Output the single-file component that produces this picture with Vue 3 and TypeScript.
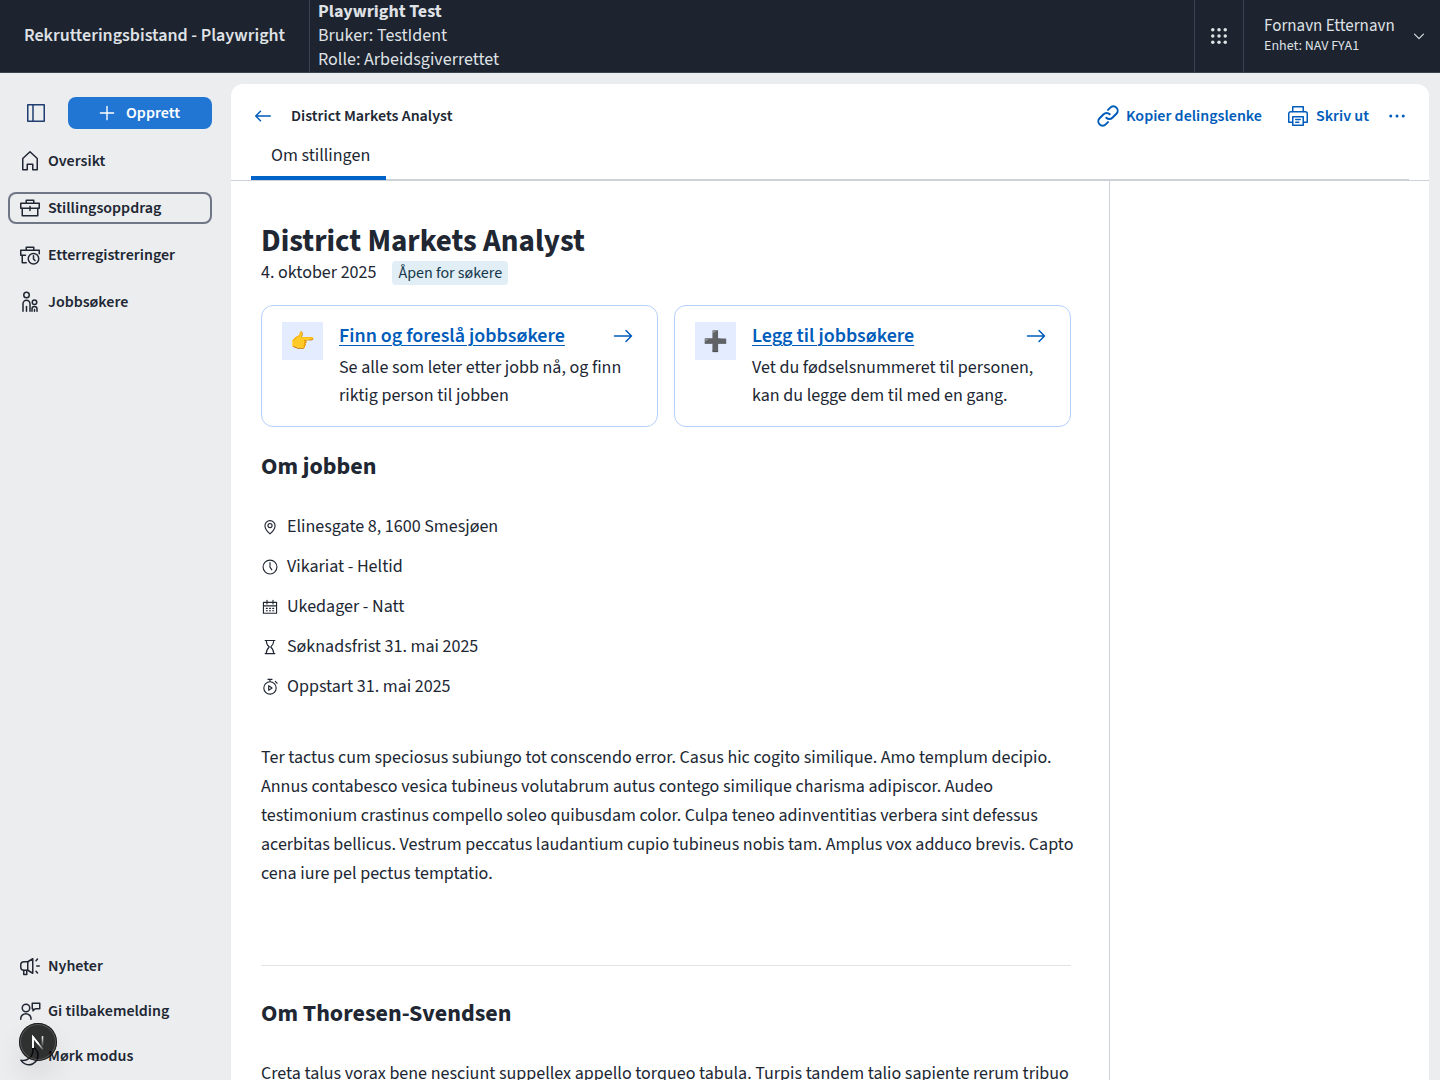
<script setup lang="ts">
import { defineComponent, h, type PropType } from 'vue'

type Shape = [tag: string, attrs: Record<string, string | number>]

const p = (d: string): Shape => ['path', { d }]
const dot = (cx: number, cy: number, r: number): Shape => ['circle', { cx, cy, r, fill: 'currentColor', stroke: 'none' }]

const shapes: Record<string, Shape[]> = {
  sidebar: [p('M3.75 3.75h16.5v16.5H3.75z'), p('M9 3.75v16.5')],
  plus: [p('M12 4.75v14.5M4.75 12h14.5')],
  house: [p('M12 2.75 4.75 9.5v11.250h4.500v-5.500h5.500v5.500h4.500V9.500z')],
  briefcase: [
    p('M2.75 7.25h18.5v5H2.75z'),
    p('M4.25 12.5v7.25h15.5V12.5'),
    p('M8.25 7V4.25h7.5V7'),
    p('M12 10.5v4'),
  ],
  briefcaseClock: [
    p('M7.500 12.250H2.750v-5h18.500v3.500'),
    p('M4.250 12.500v7.250h4'),
    p('M8.250 7V4.250h7.500V7'),
    ['circle', { cx: 15.5, cy: 15.75, r: 5.25 }],
    p('M15.500 12.750v3.250l1.500 1.500'),
  ],
  people: [
    ['circle', { cx: 8.5, cy: 5, r: 2.75 }],
    p('M5 21.250v-7.500a3.500 3.500 0 0 1 7 0v7.500'),
    p('M8.500 16.500v4.750'),
    ['circle', { cx: 16.5, cy: 12.25, r: 2.25 }],
    p('M14 21.250v-2.250a2.500 2.500 0 0 1 5 0v2.250M16.500 19.500v1.750'),
  ],
  megaphone: [
    p('M14.750 4.750v14.500l-5-3H6a3.250 3.250 0 0 1-3.250-3.250v-2A3.250 3.250 0 0 1 6 7.750h3.750z'),
    p('M9.750 8v8'),
    p('M5.750 16.500v4h3v-4'),
    p('M18 6.750l1.500-1.750M18.750 12h2.500M18 17.250l1.500 1.750'),
  ],
  feedback: [
    ['circle', { cx: 8, cy: 9, r: 3.75 }],
    p('M2.750 20.250v-.500a5 5 0 0 1 10.250 0v.500'),
    p('M14.250 4.250h7.500v5.500h-4.500l-2.250 2v-2h-.750z'),
  ],
  moon: [p('M14.500 2.750c5 2.400 6.600 7.600 5 12-1.800 5-7.400 7.200-12 5.400-2-.800-3.600-2.100-4.600-3.900 8 1.500 13.600-5.500 11.600-13.500z')],
  arrowLeft: [p('M19.250 12H4.750M9.500 7.250L4.750 12l4.750 4.750')],
  arrowRight: [p('M3.500 12h17M15 6.500l5.500 5.500-5.500 5.500')],
  link: [
    ['path', { 'stroke-width': 2, d: 'M10.300 13.700a4.300 4.300 0 0 0 6.100 0l4-4a4.300 4.300 0 0 0-6.100-6.100l-2.300 2.300' }],
    ['path', { 'stroke-width': 2, d: 'M13.700 10.300a4.300 4.300 0 0 0-6.100 0l-4 4a4.300 4.300 0 0 0 6.100 6.100l2.300-2.300' }],
  ],
  printer: [
    p('M6.750 7.500V2.750h10.500V7.500'),
    p('M6.500 18.250H2.750V9.750a2 2 0 0 1 2-2h14.500a2 2 0 0 1 2 2v8.500H17.500'),
    p('M6.750 12.750h10.500v8.500H6.750z'),
    p('M9.750 15.500h4.500M9.750 18.250h3'),
  ],
  dots: [dot(5.75, 12, 1.5), dot(12, 12, 1.5), dot(18.25, 12, 1.5)],
  grid: [5.75, 12, 18.25].flatMap((y) => [5.75, 12, 18.25].map((x) => dot(x, y, 1.75))),
  chevron: [p('M6 9.500l6 6 6-6')],
  pin: [
    p('M12 21.250c-4.500-4-6.750-7.500-6.750-11a6.750 6.750 0 0 1 13.500 0c0 3.500-2.250 7-6.750 11z'),
    ['circle', { cx: 12, cy: 10, r: 2.75 }],
  ],
  clock: [['circle', { cx: 12, cy: 12, r: 9.25 }], p('M12 6v6.250l2.500 3.500')],
  calendar: [
    p('M3.250 5.750h17.500v14.500H3.250zM3.250 10.500h17.500'),
    p('M8 3v5M16 3v5'),
    p('M7 13.750h1.500M11.250 13.750h1.500M15.500 13.750H17M7 17h1.500M11.250 17h1.500M15.500 17H17'),
  ],
  hourglass: [
    p('M5.500 3.250h13M5.500 20.750h13M7 3.250c0 4 1 6 4 8.750-3 2.750-4 4.750-4 8.750M17 3.250c0 4-1 6-4 8.750 3 2.750 4 4.750 4 8.750'),
  ],
  stopwatch: [
    ['circle', { cx: 12, cy: 13.25, r: 8.25 }],
    p('M9.250 1.750h5.500M12 2v2.500M19 4.500l2.500 2.500'),
    p('M10.250 10.250v6l4.500-3z'),
  ],
}

const Icon = defineComponent({
  props: {
    name: { type: String as PropType<string>, required: true },
    size: { type: Number, default: 24 },
  },
  setup(props) {
    return () =>
      h(
        'svg',
        {
          width: props.size,
          height: props.size,
          viewBox: '0 0 24 24',
          fill: 'none',
          stroke: 'currentColor',
          'stroke-width': 1.5,
          'stroke-linecap': 'round',
          'stroke-linejoin': 'round',
          'aria-hidden': 'true',
        },
        shapes[props.name].map(([tag, attrs]) => h(tag, attrs)),
      )
  },
})

const mainNav = [
  { icon: 'house', label: 'Oversikt', active: false },
  { icon: 'briefcase', label: 'Stillingsoppdrag', active: true },
  { icon: 'briefcaseClock', label: 'Etterregistreringer', active: false },
  { icon: 'people', label: 'Jobbsøkere', active: false },
]

const actions = [
  { emoji: '👉', title: 'Finn og foreslå jobbsøkere', text: 'Se alle som leter etter jobb nå, og finn riktig person til jobben' },
  { emoji: '➕', title: 'Legg til jobbsøkere', text: 'Vet du fødselsnummeret til personen, kan du legge dem til med en gang.' },
]

const facts = [
  { icon: 'pin', text: 'Elinesgate 8, 1600 Smesjøen' },
  { icon: 'clock', text: 'Vikariat - Heltid' },
  { icon: 'calendar', text: 'Ukedager - Natt' },
  { icon: 'hourglass', text: 'Søknadsfrist 31. mai 2025' },
  { icon: 'stopwatch', text: 'Oppstart 31. mai 2025' },
]
</script>

<template>
  <div class="app">
    <header class="topbar">
      <div class="brand">Rekrutteringsbistand - Playwright</div>
      <div class="session">
        <strong>Playwright Test</strong>
        <span>Bruker: TestIdent</span>
        <span>Rolle: Arbeidsgiverrettet</span>
      </div>
      <button class="apps" type="button" aria-label="Systemer og oppslagsverk"><Icon name="grid" /></button>
      <button class="user" type="button">
        <span class="user-text">
          <span class="user-name">Fornavn Etternavn</span>
          <span class="user-unit">Enhet: NAV FYA1</span>
        </span>
        <Icon name="chevron" :size="18" />
      </button>
    </header>

    <div class="shell">
      <aside class="sidebar">
        <div class="side-top">
          <button class="toggle" type="button" aria-label="Skjul meny"><Icon name="sidebar" /></button>
          <button class="create" type="button"><Icon name="plus" :size="22" />Opprett</button>
        </div>
        <nav class="nav">
          <a v-for="item in mainNav" :key="item.label" href="#" class="nav-item" :class="{ active: item.active }">
            <Icon :name="item.icon" />{{ item.label }}
          </a>
        </nav>
        <div class="side-bottom">
          <button class="nav-item" type="button"><Icon name="megaphone" />Nyheter</button>
          <a class="nav-item" href="#"><Icon name="feedback" />Gi tilbakemelding</a>
          <button class="nav-item" type="button"><Icon name="moon" />Mørk modus</button>
        </div>
      </aside>

      <main class="panel">
        <div class="panel-head">
          <button class="link-button" type="button" aria-label="Tilbake"><Icon name="arrowLeft" /></button>
          <span class="crumb">District Markets Analyst</span>
          <div class="tools">
            <button class="link-button" type="button"><Icon name="link" />Kopier delingslenke</button>
            <button class="link-button" type="button"><Icon name="printer" />Skriv ut</button>
            <button class="link-button more" type="button" aria-label="Flere valg"><Icon name="dots" /></button>
          </div>
        </div>
        <div class="tabs-row">
          <div class="tabs" role="tablist">
            <button class="tab" type="button" role="tab" aria-selected="true">Om stillingen</button>
          </div>
        </div>

        <div class="columns">
          <article class="content">
            <h1>District Markets Analyst</h1>
            <div class="meta">
              <span>4. oktober 2025</span>
              <span class="tag">Åpen for søkere</span>
            </div>

            <div class="cards">
              <section v-for="card in actions" :key="card.title" class="card">
                <span class="emoji">{{ card.emoji }}</span>
                <div class="card-body">
                  <div class="card-title">
                    <a href="#">{{ card.title }}</a>
                    <Icon name="arrowRight" />
                  </div>
                  <p>{{ card.text }}</p>
                </div>
              </section>
            </div>

            <h2>Om jobben</h2>
            <ul class="facts">
              <li v-for="fact in facts" :key="fact.text"><Icon :name="fact.icon" :size="18" />{{ fact.text }}</li>
            </ul>
            <p class="prose">
              Ter tactus cum speciosus subiungo tot conscendo error. Casus hic cogito similique. Amo templum decipio.
              Annus contabesco vesica tubineus volutabrum autus contego similique charisma adipiscor. Audeo testimonium
              crastinus compello soleo quibusdam color. Culpa teneo adinventitias verbera sint defessus acerbitas
              bellicus. Vestrum peccatus laudantium cupio tubineus nobis tam. Amplus vox adduco brevis. Capto cena iure
              pel pectus temptatio.
            </p>
            <hr />
            <h2>Om Thoresen-Svendsen</h2>
            <p class="prose employer">
              Creta talus vorax bene nesciunt suppellex appello torqueo tabula. Turpis tandem talio sapiente rerum tribuo
            </p>
          </article>
          <aside class="side-panel"></aside>
        </div>
      </main>
    </div>

    <button class="dev-badge" type="button" aria-label="Open Next.js Dev Tools">
      <svg width="38" height="38" viewBox="0 0 38 38" fill="none" aria-hidden="true">
        <defs>
          <linearGradient id="diagonal" x1="20" y1="20" x2="26" y2="27" gradientUnits="userSpaceOnUse">
            <stop stop-color="#fff" />
            <stop offset="1" stop-color="#fff" stop-opacity="0" />
          </linearGradient>
          <linearGradient id="stem" x1="24" y1="13" x2="24" y2="24" gradientUnits="userSpaceOnUse">
            <stop stop-color="#fff" />
            <stop offset="1" stop-color="#fff" stop-opacity="0" />
          </linearGradient>
        </defs>
        <path d="M14 25V14l10 12.500" stroke="url(#diagonal)" stroke-width="1.600" />
        <path d="M14 25V14l5.500 7" stroke="#fff" stroke-width="1.600" />
        <path d="M23.500 13.200v10" stroke="url(#stem)" stroke-width="1.600" />
      </svg>
    </button>
  </div>
</template>

<style>
body {
  margin: 0;
  overflow: hidden;
}
</style>

<style scoped>
.app {
  display: flex;
  flex-direction: column;
  height: 100vh;
  background: #ecedef;
  color: #202733;
  font-family: 'Source Sans 3', 'Noto Sans CJK JP', sans-serif;
  font-size: 18px;
  line-height: 24px;
}
.app * {
  box-sizing: border-box;
}
.app svg {
  flex: none;
  display: block;
}
button {
  padding: 0;
  border: 0;
  background: none;
  color: inherit;
  font: inherit;
  cursor: pointer;
}
h1,
h2,
p,
ul {
  margin: 0;
  padding: 0;
}

.topbar {
  display: flex;
  flex: none;
  height: 73px;
  border-bottom: 1px solid #3c4350;
  background: #1d232f;
  color: #dfe1e5;
}
.brand {
  display: flex;
  align-items: center;
  width: 310px;
  padding-left: 24px;
  border-right: 1px solid #3c4350;
  font-weight: 600;
}
.session {
  display: flex;
  flex: 1;
  flex-direction: column;
  padding-left: 8px;
}
.apps {
  display: flex;
  align-items: center;
  justify-content: center;
  width: 50px;
  border: solid #3c4350;
  border-width: 0 1px;
}
.user {
  display: flex;
  align-items: center;
  justify-content: space-between;
  width: 196px;
  padding: 0 12px 0 20px;
  text-align: left;
}
.user-text {
  display: flex;
  flex-direction: column;
}
.user-name {
  font-size: 17px;
  line-height: 20px;
}
.user-unit {
  font-size: 14px;
  line-height: 20px;
}

.shell {
  display: flex;
  flex: 1;
  min-height: 0;
}
.sidebar {
  display: flex;
  flex: none;
  flex-direction: column;
  width: 231px;
  padding: 24px 19px 8px 8px;
  font-size: 16px;
  font-weight: 600;
}
.side-top {
  display: flex;
  gap: 4px;
  margin-bottom: 16px;
}
.toggle {
  display: flex;
  align-items: center;
  justify-content: center;
  width: 56px;
  height: 32px;
  color: #1f3d70;
}
.create {
  display: flex;
  flex: 1;
  align-items: center;
  justify-content: center;
  gap: 8px;
  height: 32px;
  padding-right: 4px;
  border-radius: 8px;
  background: #2176d4;
  color: #fff;
}
.nav {
  display: flex;
  flex-direction: column;
  gap: 15px;
}
.side-bottom {
  display: flex;
  flex-direction: column;
  gap: 13px;
  margin-top: auto;
}
.nav-item {
  display: flex;
  align-items: center;
  gap: 6px;
  height: 32px;
  padding: 0 10px;
  border-radius: 8px;
  color: #202733;
  text-decoration: none;
}
.nav-item.active {
  box-shadow: inset 0 0 0 2px #6f7686;
}

.panel {
  display: flex;
  flex: 1;
  flex-direction: column;
  min-width: 0;
  margin: 11px 11px 0 0;
  border-radius: 12px 12px 0 0;
  background: #fff;
}
.panel-head {
  display: flex;
  align-items: center;
  height: 52px;
  padding: 12px 20px 0;
  font-size: 16px;
  font-weight: 600;
}
.crumb {
  margin-left: 16px;
}
.tools {
  display: flex;
  gap: 24px;
  margin-left: auto;
}
.link-button {
  display: flex;
  align-items: center;
  gap: 6px;
  color: #005cba;
}
.more {
  margin-left: -8px;
}
.tabs-row {
  padding: 0 20px;
  border-bottom: 1px solid #cdd1d8;
}
.tabs {
  display: flex;
  height: 44px;
  box-shadow: inset 0 -1px #cdd1d8;
}
.tab {
  padding: 0 16px 4px 20px;
  box-shadow: inset 0 -4px #0063c7;
}

.columns {
  display: flex;
  flex: 1;
  min-height: 0;
}
.content {
  flex: 1;
  min-width: 0;
  padding: 40px 38px 0 30px;
  overflow: hidden;
}
.side-panel {
  width: 320px;
  border-left: 1px solid #cdd1d8;
}
h1 {
  font-size: 31px;
  font-weight: 700;
  line-height: 40px;
}
h2 {
  font-size: 24px;
  font-weight: 700;
  line-height: 32px;
}
.meta {
  display: flex;
  gap: 16px;
}
.tag {
  padding: 0 6px;
  border-radius: 4px;
  background: #e1eef6;
  color: #153749;
  font-size: 16px;
}
.cards {
  display: grid;
  grid-template-columns: 1fr 1fr;
  gap: 16px;
  margin: 20px 0 24px;
}
.card {
  display: flex;
  align-items: flex-start;
  gap: 16px;
  padding: 16px 20px;
  border: 1px solid #b5d1fb;
  border-radius: 12px;
}
.emoji {
  display: flex;
  flex: none;
  align-items: center;
  justify-content: center;
  width: 41px;
  height: 38px;
  background: #e3edff;
  font-family: 'Noto Color Emoji', sans-serif;
  font-size: 20px;
}
.card-body {
  flex: 1;
  line-height: 28px;
}
.card-title {
  display: flex;
  align-items: center;
  justify-content: space-between;
  margin-bottom: 4px;
  padding-right: 2px;
  color: #005cba;
  font-size: 20px;
  font-weight: 600;
}
.card-title a {
  color: inherit;
  text-decoration-thickness: 1px;
  text-underline-offset: 3px;
}
.facts {
  margin: 24px 0 36px;
  list-style: none;
}
.facts li {
  display: flex;
  align-items: center;
  gap: 8px;
  height: 40px;
}
.prose {
  margin-right: -8px;
  line-height: 29px;
}
hr {
  margin: 77px 0 32px;
  border: 0;
  border-top: 1px solid #e2e4e8;
}
.employer {
  margin-top: 29px;
}

.dev-badge {
  position: fixed;
  bottom: 19px;
  left: 19px;
  width: 38px;
  height: 38px;
  border-radius: 50%;
  background: rgba(0, 0, 0, 0.8);
  box-shadow:
    inset 0 0 0 1px rgba(0, 0, 0, 0.7),
    inset 0 0 0 2px rgba(255, 255, 255, 0.18),
    0 16px 32px -8px rgba(0, 0, 0, 0.24);
}
</style>
